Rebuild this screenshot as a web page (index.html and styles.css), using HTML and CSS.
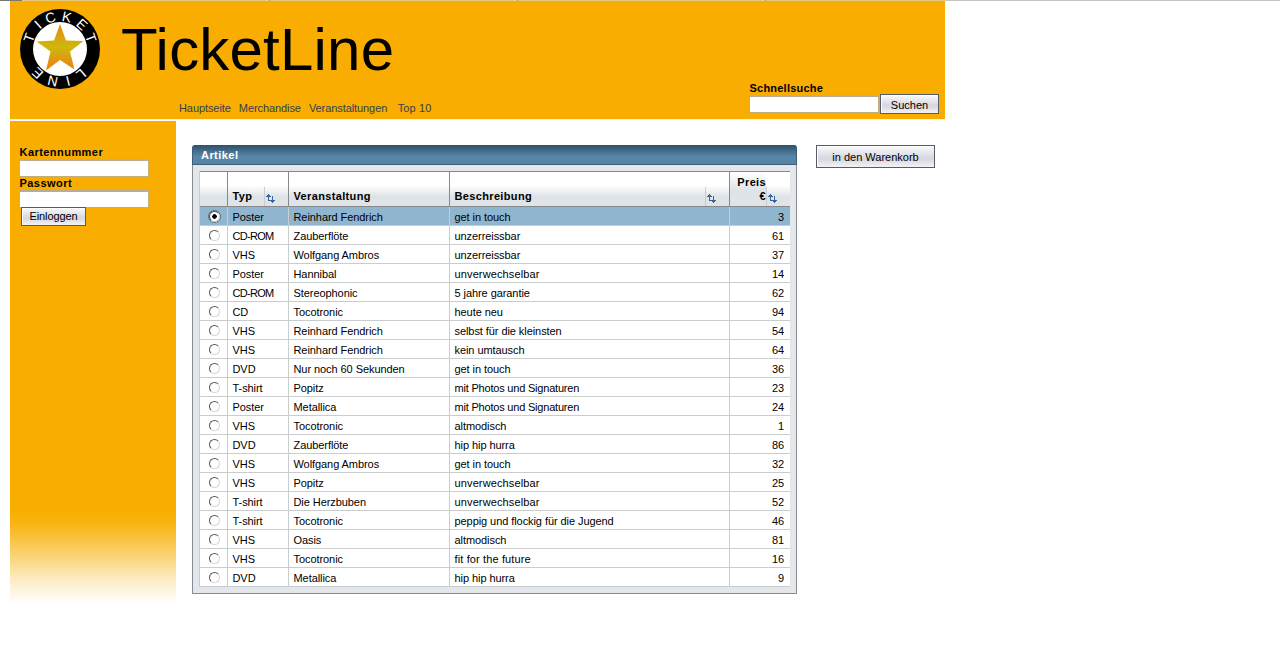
FILE: index.html
```html
<!DOCTYPE html>
<html lang="de">
<head>
<meta charset="utf-8">
<title>TicketLine</title>
<link rel="stylesheet" href="styles.css">
</head>
<body>
<div class="topline"></div>
<header class="header">
  <svg class="logo" width="82" height="82" viewBox="0 0 82 82">
    <defs><linearGradient id="star" x1="0" y1="0" x2="0" y2="1"><stop offset="0" stop-color="#e58a12"/><stop offset=".5" stop-color="#ceb80c"/><stop offset="1" stop-color="#ee7d10"/></linearGradient></defs>
    <circle cx="41" cy="41" r="40"/>
    <circle cx="41" cy="41" r="27" fill="#fff"/>
    <path fill="url(#star)" d="M41 16 47 32.500 64.500 33 51 43.500 55.500 61.500 41 52 27 62.500 31.500 43.500 17.500 33.500 35 32.500Z"/>
    <g class="ring">
      <text transform="rotate(-70 41 41)" x="41" y="13">T</text>
      <text transform="rotate(-42 41 41)" x="41" y="13">I</text>
      <text transform="rotate(-17 41 41)" x="41" y="13">C</text>
      <text transform="rotate(12 41 41)" x="41" y="13">K</text>
      <text transform="rotate(42 41 41)" x="41" y="13">E</text>
      <text transform="rotate(70 41 41)" x="41" y="13">T</text>
      <text transform="rotate(140 41 41)" x="41" y="13">L</text>
      <text transform="rotate(166 41 41)" x="41" y="13">I</text>
      <text transform="rotate(193 41 41)" x="41" y="13">N</text>
      <text transform="rotate(223 41 41)" x="41" y="13">E</text>
    </g>
  </svg>
  <div class="brand">
    <h1>TicketLine</h1>
    <nav class="nav"><a>Hauptseite</a><a>Merchandise</a><a>Veranstaltungen</a><a>Top 10</a></nav>
  </div>
  <form class="search">
    <label>Schnellsuche</label>
    <div class="search-row"><input class="field"><button type="button" class="btn">Suchen</button></div>
  </form>
</header>
<div class="columns">
  <aside class="sidebar">
    <label class="wide">Kartennummer</label><input class="field">
    <label class="wide">Passwort</label><input class="field">
    <button type="button" class="btn login">Einloggen</button>
  </aside>
  <main class="panel">
    <h2>Artikel</h2>
    <div class="panel-body">
      <table>
        <colgroup><col class="c1"><col class="c2"><col class="c3"><col class="c4"><col class="c5"></colgroup>
        <thead><tr>
          <th></th>
          <th><div class="head"><span>Typ</span><svg class="sort" viewBox="0 0 24 19"><path class="rule" d="M0 0h1v19H0z"/><path d="M4 7h1v1h1v1h1v1H5v3h2v1H4v-4H2V9h1V8h1zM8 9h1v4h2v1h-1v1H9v1H8v-1H7v-1H6v-1h2z"/></svg></div></th>
          <th><div class="head"><span>Veranstaltung</span></div></th>
          <th><div class="head"><span>Beschreibung</span><svg class="sort" viewBox="0 0 24 19"><path class="rule" d="M0 0h1v19H0z"/><path d="M4 7h1v1h1v1h1v1H5v3h2v1H4v-4H2V9h1V8h1zM8 9h1v4h2v1h-1v1H9v1H8v-1H7v-1H6v-1h2z"/></svg></div></th>
          <th><div class="head price"><span>Preis<br>€</span><svg class="sort" viewBox="0 0 24 19"><path class="rule" d="M0 0h1v19H0z"/><path d="M4 7h1v1h1v1h1v1H5v3h2v1H4v-4H2V9h1V8h1zM8 9h1v4h2v1h-1v1H9v1H8v-1H7v-1H6v-1h2z"/></svg></div></th>
        </tr></thead>
        <tbody>
          <tr class="selected"><td><i class="radio on"></i></td><td>Poster</td><td>Reinhard Fendrich</td><td>get in touch</td><td>3</td></tr>
          <tr><td><i class="radio"></i></td><td class="tight">CD-ROM</td><td>Zauberflöte</td><td>unzerreissbar</td><td>61</td></tr>
          <tr><td><i class="radio"></i></td><td>VHS</td><td>Wolfgang Ambros</td><td>unzerreissbar</td><td>37</td></tr>
          <tr><td><i class="radio"></i></td><td>Poster</td><td>Hannibal</td><td class="loose">unverwechselbar</td><td>14</td></tr>
          <tr><td><i class="radio"></i></td><td class="tight">CD-ROM</td><td>Stereophonic</td><td>5 jahre garantie</td><td>62</td></tr>
          <tr><td><i class="radio"></i></td><td>CD</td><td>Tocotronic</td><td>heute neu</td><td>94</td></tr>
          <tr><td><i class="radio"></i></td><td>VHS</td><td>Reinhard Fendrich</td><td>selbst für die kleinsten</td><td>54</td></tr>
          <tr><td><i class="radio"></i></td><td>VHS</td><td>Reinhard Fendrich</td><td>kein umtausch</td><td>64</td></tr>
          <tr><td><i class="radio"></i></td><td>DVD</td><td>Nur noch 60 Sekunden</td><td>get in touch</td><td>36</td></tr>
          <tr><td><i class="radio"></i></td><td>T-shirt</td><td>Popitz</td><td class="snug">mit Photos und Signaturen</td><td>23</td></tr>
          <tr><td><i class="radio"></i></td><td>Poster</td><td>Metallica</td><td class="snug">mit Photos und Signaturen</td><td>24</td></tr>
          <tr><td><i class="radio"></i></td><td>VHS</td><td>Tocotronic</td><td>altmodisch</td><td>1</td></tr>
          <tr><td><i class="radio"></i></td><td>DVD</td><td>Zauberflöte</td><td>hip hip hurra</td><td>86</td></tr>
          <tr><td><i class="radio"></i></td><td>VHS</td><td>Wolfgang Ambros</td><td>get in touch</td><td>32</td></tr>
          <tr><td><i class="radio"></i></td><td>VHS</td><td>Popitz</td><td class="loose">unverwechselbar</td><td>25</td></tr>
          <tr><td><i class="radio"></i></td><td>T-shirt</td><td>Die Herzbuben</td><td class="loose">unverwechselbar</td><td>52</td></tr>
          <tr><td><i class="radio"></i></td><td>T-shirt</td><td>Tocotronic</td><td>peppig und flockig für die Jugend</td><td>46</td></tr>
          <tr><td><i class="radio"></i></td><td>VHS</td><td>Oasis</td><td>altmodisch</td><td>81</td></tr>
          <tr><td><i class="radio"></i></td><td>VHS</td><td>Tocotronic</td><td class="loose">fit for the future</td><td>16</td></tr>
          <tr><td><i class="radio"></i></td><td>DVD</td><td>Metallica</td><td>hip hip hurra</td><td>9</td></tr>
        </tbody>
      </table>
    </div>
  </main>
  <button type="button" class="btn cart">in den Warenkorb</button>
</div>
</body>
</html>
```
FILE: styles.css
```css
* { box-sizing: border-box; }
body { margin: 0; background: #fff; color: #000; font: 11px/13px "Liberation Sans", Arial, sans-serif; overflow: hidden; }
h1, h2 { margin: 0; font-weight: normal; }
label { display: block; padding-left: .5px; font-weight: bold; line-height: 13px; letter-spacing: .22px; }
label.wide { letter-spacing: .45px; }
.topline { height: 1px; background: linear-gradient(90deg, #777 22px, transparent 22px), linear-gradient(90deg, transparent 945px, #c5c4bf 945px), repeating-linear-gradient(90deg, #e6c880 0 247px, #b39a55 247px 248px) 22px 0; }
.header { display: flex; width: 935px; height: 118px; margin-left: 10px; padding-left: 9px; background: #f8ad00; box-shadow: 0 1px #fff6b8; }
.logo { margin-top: 7px; flex: none; }
.ring text { fill: #fff; font: 14px "Liberation Sans", Arial, sans-serif; text-anchor: middle; }
.brand { flex: none; width: 649px; padding: 15px 0 0 20px; }
.brand h1 { font-size: 60px; line-height: 68px; letter-spacing: .2px; }
.nav { display: flex; gap: 9px; margin: 18px 0 0 58px; color: #36404a; letter-spacing: -.08px; }
.nav a:nth-child(2) { margin: 0 -1px; }
.nav a:last-child { margin-left: 1.500px; letter-spacing: .1px; }
.search { flex: none; width: 190px; margin-left: -1px; padding-top: 81px; }
.search-row { display: flex; gap: 1px; align-items: flex-start; }
.field { display: block; width: 130px; height: 18px; margin: 0; padding: 0 3px; border: 1px solid #c3ae79; border-top: 2px solid #b7ad96; background: #fff; outline: none; }
.btn { display: block; height: 20px; margin: 0; padding: 0; border: 1px solid #555c69; background: linear-gradient(#fafafb, #d5d6de 60%, #f3f3f6); box-shadow: inset 1px 1px 0 #fff; color: #000; font: 11px/18px "Liberation Sans", Arial, sans-serif; }
.search .btn { width: 59px; margin-top: -1px; padding-top: 1px; }
.columns { display: flex; align-items: flex-start; margin: 2px 0 0 10px; }
.sidebar { width: 166px; height: 484px; padding: 25px 0 0 9px; background: linear-gradient(#f8ad00 388px, #f9b40f 402px, #fad376 435px, #fdecc4 459px, #fff 483px); }
.sidebar .login { width: 65px; height: 19px; margin: -1px 0 0 2px; line-height: 17px; letter-spacing: -.1px; }
.panel { width: 605px; margin: 24px 0 0 16px; }
.panel h2 { height: 20px; padding-left: 8px; border: 1px solid #3d5e77; border-top: 0; border-radius: 3px 3px 0 0; background: linear-gradient(#2f5068, #5786a8 60%, #5684a5); color: #fff; font: bold 11px/20px "Liberation Sans", Arial, sans-serif; letter-spacing: .45px; }
.panel-body { height: 429px; padding: 6px 6px 0; border: 1px solid #878c92; border-top: 0; background: #e3e7ec; }
table { width: 591px; border-collapse: separate; border-spacing: 0; table-layout: fixed; background: #fff; border-left: 1px solid #c9cdcd; }
.c1 { width: 28px; } .c2 { width: 61px; } .c3 { width: 161px; } .c4 { width: 280px; } .c5 { width: 60px; }
th { height: 36px; padding: 0; border: solid #84898d; border-width: 1px 1px 1px 0; background: linear-gradient(#fff 40%, #dfe3e6 72%, #e1e4e7); vertical-align: bottom; text-align: left; letter-spacing: .35px; }
th:last-child, td:last-child { border-right: 0; }
.head { display: flex; align-items: flex-end; justify-content: space-between; height: 34px; padding-left: 4.500px; line-height: 14px; }
.head span { padding-bottom: 3px; }
.sort { width: 24px; height: 19px; fill: #3b6399; shape-rendering: crispEdges; }
.rule { fill: #c8cccd; }
.price { justify-content: flex-end; padding-left: 0; text-align: right; }
.price span { height: 34px; width: 36px; padding: 3px 0 0; background: linear-gradient(#fff, #dfe3e6 55%, #e1e4e7); }
td { height: 19px; padding: 2px 4px 0 4.500px; border: solid #c9cdcd; border-width: 0 1px 1px 0; line-height: 16px; letter-spacing: -.07px; white-space: nowrap; }
td.tight { letter-spacing: -.7px; }
td.snug { letter-spacing: -.2px; }
td.loose { letter-spacing: .13px; }
td:last-child { padding-right: 6px; text-align: right; }
td:first-child { padding: 0 0 0 9px; }
.selected td { background: #90b5ce; }
.radio { display: block; width: 11px; height: 11px; border: 1.500px solid; border-color: #555 #d8d6d0 #d8d6d0 #555; border-radius: 50%; background: #fff; }
.radio.on { background: radial-gradient(#000 2px, #fff 2.500px); outline: 1px dotted #333; outline-offset: 0; }
.cart { width: 119px; height: 23px; margin: 24px 0 0 19px; padding-top: 1px; line-height: 21px; }
```
